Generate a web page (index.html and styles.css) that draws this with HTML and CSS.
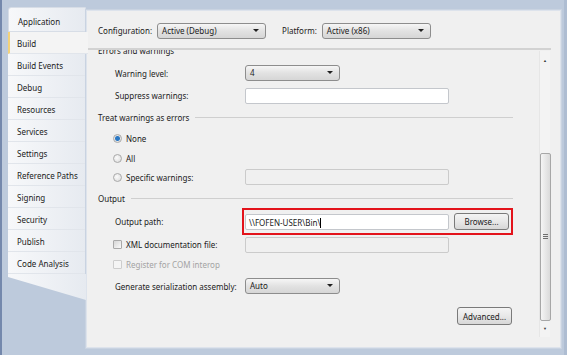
FILE: index.html
```html
<!DOCTYPE html>
<html lang="en">
<head>
    <meta charset="UTF-8">
    <title>Project Properties - Build</title>
    <link rel="stylesheet" href="styles.css">
</head>
<body>

    <div class="window">

        <div class="tabs">
            <div class="tab first">Application</div>
            <div class="tab active">Build</div>
            <div class="tab">Build Events</div>
            <div class="tab">Debug</div>
            <div class="tab">Resources</div>
            <div class="tab">Services</div>
            <div class="tab">Settings</div>
            <div class="tab">Reference Paths</div>
            <div class="tab">Signing</div>
            <div class="tab">Security</div>
            <div class="tab">Publish</div>
            <div class="tab">Code Analysis</div>
            <div class="tabs-tail"></div>
        </div>

        <div class="panel">
            <div class="topbar">
                <span class="top-label">Configuration:</span>
                <div class="select wide">Active (Debug)</div>
                <span class="top-label platform">Platform:</span>
                <div class="select wide">Active (x86)</div>
            </div>

            <div class="body">
                <div class="scroll">
                    <div class="section clipped">Errors and warnings</div>
                    <div class="row warn-row">
                        <span class="label">Warning level:</span>
                        <div class="select">4</div>
                    </div>
                    <div class="row suppress-row">
                        <span class="label">Suppress warnings:</span>
                        <div class="input"></div>
                    </div>

                    <div class="section">Treat warnings as errors</div>
                    <div class="opt first-opt"><span class="radio checked"></span>None</div>
                    <div class="opt short"><span class="radio"></span>All</div>
                    <div class="opt">
                        <span class="radio"></span><span class="opt-text">Specific warnings:</span>
                        <div class="input disabled"></div>
                    </div>

                    <div class="section">Output</div>
                    <div class="row path-row">
                        <span class="label">Output path:</span>
                        <div class="highlight">
                            <div class="input">\\FOFEN-USER\Bin\<span class="caret"></span></div>
                            <button class="btn">Browse...</button>
                        </div>
                    </div>
                    <div class="opt xml-row">
                        <span class="check"></span><span class="opt-text">XML documentation file:</span>
                        <div class="input disabled"></div>
                    </div>
                    <div class="opt off short"><span class="check"></span>Register for COM interop</div>
                    <div class="row gen-row">
                        <span class="label">Generate serialization assembly:</span>
                        <div class="select">Auto</div>
                    </div>
                    <div class="actions">
                        <button class="btn tall">Advanced...</button>
                    </div>
                </div>

                <div class="scrollbar">
                    <span class="arrow">&#9650;</span>
                    <div class="thumb"><span class="grip"></span></div>
                    <span class="arrow">&#9660;</span>
                </div>
            </div>
        </div>

    </div>

</body>
</html>
```

FILE: styles.css
```css
* { box-sizing: border-box; margin: 0; padding: 0; }
body {
    background: #bdcadc;
    font-family: "Noto Sans", "Open Sans", sans-serif;
    font-size: 8px;
    color: #1b1b1b;
    overflow: hidden;
}
.window {
    display: flex;
    height: 355px;
    border-left: 2px solid #7488ac;
    border-right: 3px solid #aebdd2;
    padding: 7px 3px 0 6px;
}

/* left tab strip */
.tabs {
    width: 78px;
    display: flex;
    flex-direction: column;
}
.tab {
    height: 22px;
    line-height: 22px;
    padding: 1px 0 0 9px;
    background: linear-gradient(to right, #f7f8fa, #e6eaf0);
    border-bottom: 1px solid #e1e5eb;
}
.tab.first {
    height: 25px;
    padding-top: 3px;
    border: 1px solid #d7dde6;
    border-radius: 3px 0 0 0;
}
.tab.active {
    background: #f4f4f4;
    border-left: 2px solid #f3d27a;
    padding-left: 7px;
    margin-right: -2px;
    position: relative;
    z-index: 1;
}
.tabs-tail {
    height: 26px;
    background: linear-gradient(to right, #f7f8fa, #e6eaf0);
    clip-path: polygon(0 0, 100% 0, 100% 100%, 0 12%);
}

/* property panel */
.panel {
    flex: 1;
    margin-top: 3px;
    height: 338px;
    background: #f0f0f0;
    border: 1px solid #dde3ec;
    box-shadow: 0 0 0 1px #c9d3e1;
    display: flex;
    flex-direction: column;
}
.topbar {
    height: 39px;
    flex-shrink: 0;
    display: flex;
    align-items: center;
    gap: 5px;
    padding: 2px 0 0 11px;
    margin-right: 9px;
    border-bottom: 2px solid #d2d2d2;
}
.top-label.platform {
    margin-left: 11px;
}
.select {
    width: 95px;
    height: 16px;
    line-height: 14px;
    padding-left: 4px;
    border: 1px solid #8d8d8d;
    border-radius: 3px;
    background: linear-gradient(#f6f6f6, #e2e2e2 50%, #d6d6d6);
    position: relative;
}
.select::after {
    content: "";
    position: absolute;
    right: 6px;
    top: 5px;
    border-left: 3px solid transparent;
    border-right: 3px solid transparent;
    border-top: 3px solid #202020;
}
.select.wide {
    width: 109px;
}

.body {
    flex: 1;
    display: flex;
    min-height: 0;
}
.scroll {
    flex: 1;
    overflow: hidden;
    padding: 1px 26px 0 11px;
}
.section {
    height: 22px;
    flex-shrink: 0;
    display: flex;
    align-items: center;
    gap: 6px;
}
.section::after {
    content: "";
    flex: 1;
    border-top: 1px solid #cfcfcf;
}
.section.clipped {
    margin-top: -12px;
}
.section.clipped::after {
    display: none;
}
.row {
    height: 22px;
    display: flex;
    align-items: center;
    padding-left: 17px;
}
.warn-row {
    height: 24px;
}
.suppress-row {
    height: 21px;
}
.label {
    width: 130px;
}
.input {
    width: 204px;
    height: 16px;
    line-height: 15px;
    padding-left: 3px;
    background: #fff;
    border: 1px solid #c4c7cc;
    border-radius: 2px;
}
.input.disabled {
    background: #f0f0f0;
    border-color: #cbcbcb;
}
.caret {
    display: inline-block;
    width: 1px;
    height: 10px;
    background: #000;
    vertical-align: -2px;
}
.opt {
    height: 20px;
    display: flex;
    align-items: center;
    padding-left: 15px;
}
.opt.first-opt {
    height: 21px;
}
.opt.short {
    height: 18px;
}
.opt.xml-row {
    height: 21px;
}
.opt.off {
    color: #a3a3a3;
}
.opt-text {
    width: 119px;
}
.radio, .check {
    width: 9px;
    height: 9px;
    margin-right: 4px;
    border: 1px solid #a9a9a9;
    background: radial-gradient(circle at 40% 40%, #fbfbfb, #d8d8d8);
}
.radio {
    border-radius: 50%;
}
.radio.checked {
    background: radial-gradient(circle, #2b78c4 0 2px, #e6e6e6 3px);
}
.check {
    border-radius: 1px;
    background: linear-gradient(135deg, #d6d6d6, #fafafa);
}
.opt.off .check {
    border-color: #cdcdcd;
    background: #f4f4f4;
}

.path-row {
    height: 25px;
}
.highlight {
    display: flex;
    align-items: center;
    gap: 5px;
    margin-left: -3px;
    padding: 3px 2px 3px 1px;
    border: 2px solid #e3131b;
}
.gen-row {
    height: 26px;
}
.btn {
    width: 55px;
    height: 17px;
    font-family: inherit;
    font-size: 8px;
    color: #1b1b1b;
    border: 1px solid #7a7a7a;
    border-radius: 3px;
    background: linear-gradient(#f4f4f4, #e8e8e8 50%, #d7d7d7);
}
.btn.tall {
    height: 18px;
}
.actions {
    display: flex;
    justify-content: flex-end;
    padding: 8px 1px 0 0;
}

/* vertical scrollbar */
.scrollbar {
    width: 11px;
    margin: 1px 10px 10px 0;
    display: flex;
    flex-direction: column;
    align-items: center;
    background: #f3f3f3;
    border-left: 1px solid #e6e6e6;
}
.arrow {
    font-size: 4px;
    color: #3a3a3a;
    height: 16px;
    line-height: 16px;
}
.arrow:first-child {
    padding-top: 2px;
    margin-bottom: 86px;
}
.thumb {
    width: 11px;
    height: 168px;
    border: 1px solid #a7a7a7;
    border-radius: 2px;
    background: linear-gradient(to right, #f5f5f5, #dadada);
    display: flex;
    align-items: center;
    justify-content: center;
}
.grip {
    width: 5px;
    height: 6px;
    background: repeating-linear-gradient(#6e6e6e 0 1px, transparent 1px 2px);
}
```
